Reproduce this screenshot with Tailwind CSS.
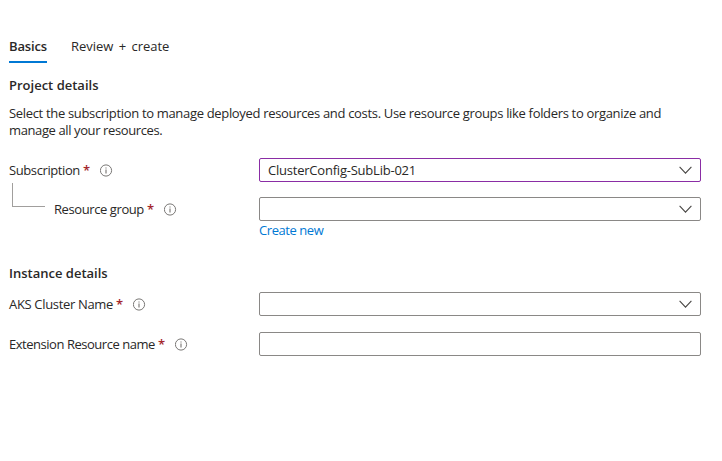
<!DOCTYPE html>
<html lang="en"><head><meta charset="utf-8"><title>Create</title>
<script src="https://cdn.jsdelivr.net/npm/@tailwindcss/browser@4"></script></head>
<body class="bg-white text-[#292827] text-[13px] leading-[17px] font-['Open_Sans','Noto_Sans',sans-serif]">
<svg class="hidden">
<symbol id="info" viewBox="0 0 13 13"><circle cx="6" cy="6.5" r="5.6" fill="none" stroke="#797775"/><path d="M6 5.5V9.5M6 3.4V4.5" stroke="#8a8886" stroke-width="1.3" fill="none"/></symbol>
<symbol id="chev" viewBox="0 0 14 8"><path d="M.6 .9L6.5 7.1L12.4 .9" fill="none" stroke="#484644" stroke-width="1.1"/></symbol>
</svg>
<main class="w-[701px] pl-[9px] pt-[38px]">
<nav class="flex h-[25px] gap-6"><a class="w-[38px] whitespace-nowrap font-semibold tracking-[-0.15px] border-b-2 border-[#0078d4]"><span>Basics</span></a><a class="[word-spacing:2.2px] tracking-[-0.05px]"><span>Review + create</span></a></nav>
<h2 class="mt-[14px] font-semibold"><span>Project details</span></h2>
<p class="mt-[11px] whitespace-nowrap tracking-[-0.325px]"><span>Select the subscription to manage deployed resources and costs. Use resource groups like folders to organize and</span><br><span class="tracking-[-0.39px]">manage all your resources.</span></p>
<div class="mt-[19px] flex h-6 items-center"><label class="flex w-[250px] items-center"><span class="w-[71px] whitespace-nowrap tracking-[-0.4px]">Subscription</span><b class="ml-[3px] w-[7px] font-semibold text-[#a4262c]">*</b><svg class="ml-[10px] size-[13px]"><use href="#info"/></svg></label><div class="flex h-6 flex-1 items-center justify-between rounded-[2px] border border-[#8a2da5] pl-2 pr-[7px]"><span class="tracking-[-0.22px]">ClusterConfig-SubLib-021</span><svg class="h-2 w-3.5"><use href="#chev"/></svg></div></div>
<div class="mt-[15px] flex h-6 items-center"><div class="ml-[3px] -mt-[28px] mr-[9px] h-6 w-[33px] border-b border-l border-[#a19f9d]"></div><label class="flex w-[205px] items-center"><span class="w-[90px] whitespace-nowrap tracking-[-0.41px]">Resource group</span><b class="ml-[3px] w-[7px] font-semibold text-[#a4262c]">*</b><svg class="ml-[10px] size-[13px]"><use href="#info"/></svg></label><div class="flex h-6 flex-1 items-center justify-end rounded-[2px] border border-[#8a8886] px-[7px]"><svg class="h-2 w-3.5"><use href="#chev"/></svg></div></div>
<a class="ml-[250px] mt-[1px] block tracking-[-0.43px] text-[#0078d4]"><span>Create new</span></a>
<h2 class="mt-[26px] font-semibold"><span>Instance details</span></h2>
<div class="mt-[10px] flex h-6 items-center"><label class="flex w-[250px] items-center"><span class="w-[104px] whitespace-nowrap tracking-[-0.33px]">AKS Cluster Name</span><b class="ml-[3px] w-[7px] font-semibold text-[#a4262c]">*</b><svg class="ml-[10px] size-[13px]"><use href="#info"/></svg></label><div class="flex h-6 flex-1 items-center justify-end rounded-[2px] border border-[#8a8886] px-[7px]"><svg class="h-2 w-3.5"><use href="#chev"/></svg></div></div>
<div class="mt-4 flex h-6 items-center"><label class="flex w-[250px] items-center"><span class="w-[146px] whitespace-nowrap tracking-[-0.47px]">Extension Resource name</span><b class="ml-[3px] w-[7px] font-semibold text-[#a4262c]">*</b><svg class="ml-[10px] size-[13px]"><use href="#info"/></svg></label><input class="h-6 flex-1 rounded-[2px] border border-[#8a8886] px-2"></div>
</main></body></html>
